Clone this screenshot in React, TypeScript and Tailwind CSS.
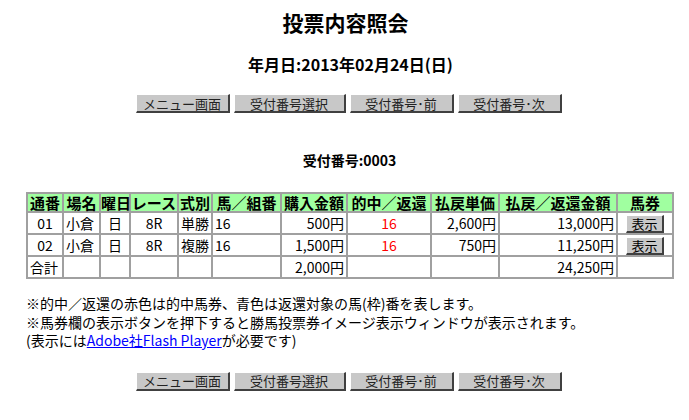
const font = { fontFamily: '"MS PGothic", "Noto Sans CJK JP", sans-serif' }

const navButtons = [
  { label: 'メニュー画面', w: 'w-[94px]' },
  { label: '受付番号選択', w: 'w-[112px]' },
  { label: '受付番号･前', w: 'w-[104px]' },
  { label: '受付番号･次', w: 'w-[104px]' },
]

const rows = [
  { no: '01', place: '小倉', day: '日', race: '8R', kind: '単勝', horse: '16', buy: '500円', hit: '16', unit: '2,600円', pay: '13,000円' },
  { no: '02', place: '小倉', day: '日', race: '8R', kind: '複勝', horse: '16', buy: '1,500円', hit: '16', unit: '750円', pay: '11,250円' },
]

const headers = [
  { label: '通番', w: 'w-[36px]' },
  { label: '場名', w: 'w-[37px]' },
  { label: '曜日', w: 'w-[30px]' },
  { label: 'レース', w: 'w-[48px]' },
  { label: '式別', w: 'w-[34px]' },
  { label: '馬／組番', w: 'w-[69px]' },
  { label: '購入金額', w: 'w-[66px]' },
  { label: '的中／返還', w: 'w-[84px]' },
  { label: '払戻単価', w: 'w-[68px]' },
  { label: '払戻／返還金額', w: 'w-[118px]' },
  { label: '馬券', w: 'w-[56px]' },
]

function NavBar() {
  return (
    <div className="flex justify-center gap-[4px] pl-[8px]">
      {navButtons.map((b) => (
        <button
          key={b.label}
          className={`${b.w} h-[19px] bg-[#c8c8c8] border-t border-l border-t-white border-l-white border-b-2 border-r-2 border-b-[#404040] border-r-[#404040] text-[13px] leading-none text-[#222]`}
        >
          {b.label}
        </button>
      ))}
    </div>
  )
}

function Td({ children, className = '' }: { children?: React.ReactNode; className?: string }) {
  return <td className={`border border-[#a0a0a0] px-[2px] h-[22px] leading-[16px] whitespace-nowrap ${className}`}>{children}</td>
}

export default function App() {
  return (
    <div style={font} className="w-[689px] h-[420px] bg-white text-black overflow-hidden">
      <h1 className="text-center text-[21px] font-bold leading-none pt-[12px] pl-[2px]">投票内容照会</h1>
      <div className="text-center text-[16px] font-bold leading-none mt-[23px] pl-[12px]">年月日:2013年02月24日(日)</div>
      <div className="mt-[22px]">
        <NavBar />
      </div>
      <div className="text-center text-[14px] font-bold leading-none mt-[40px] pl-[10px]">受付番号:0003</div>

      <div className="pl-[26px] mt-[25px]">
        <table className="w-[646px] table-fixed border border-[#a0a0a0] border-separate border-spacing-0 text-[14px] leading-none">
          <thead>
            <tr className="bg-[#a0ffa0]">
              {headers.map((h) => (
                <th key={h.label} className={`${h.w} border border-[#a0a0a0] h-[19px] p-0 text-[15px] leading-[17px] font-bold text-center whitespace-nowrap`}>
                  {h.label}
                </th>
              ))}
            </tr>
          </thead>
          <tbody>
            {rows.map((r) => (
              <tr key={r.no}>
                <Td className="text-center">{r.no}</Td>
                <Td>{r.place}</Td>
                <Td className="text-center">{r.day}</Td>
                <Td className="text-center">{r.race}</Td>
                <Td>{r.kind}</Td>
                <Td>{r.horse}</Td>
                <Td className="text-right">{r.buy}</Td>
                <Td className="text-center text-[#ff0000]">{r.hit}</Td>
                <Td className="text-right">{r.unit}</Td>
                <Td className="text-right">{r.pay}</Td>
                <Td className="text-center">
                  <button className="w-[38px] h-[18px] align-middle bg-[#c8c8c8] border-t border-l border-t-white border-l-white border-b-2 border-r-2 border-b-[#404040] border-r-[#404040] text-[13px] leading-none">
                    表示
                  </button>
                </Td>
              </tr>
            ))}
            <tr>
              <Td className="h-[19px]">合計</Td>
              <Td />
              <Td />
              <Td />
              <Td />
              <Td />
              <Td className="text-right">2,000円</Td>
              <Td />
              <Td />
              <Td className="text-right">24,250円</Td>
              <Td />
            </tr>
          </tbody>
        </table>

        <div className="mt-[15px] text-[14px] leading-[18.5px]">
          <p>※的中／返還の赤色は的中馬券、青色は返還対象の馬(枠)番を表します。</p>
          <p>※馬券欄の表示ボタンを押下すると勝馬投票券イメージ表示ウィンドウが表示されます。</p>
          <p>
            (表示には<a href="#" className="text-[#0000ff] underline">Adobe社Flash Player</a>が必要です)
          </p>
        </div>
      </div>

      <div className="mt-[22px]">
        <NavBar />
      </div>
    </div>
  )
}
